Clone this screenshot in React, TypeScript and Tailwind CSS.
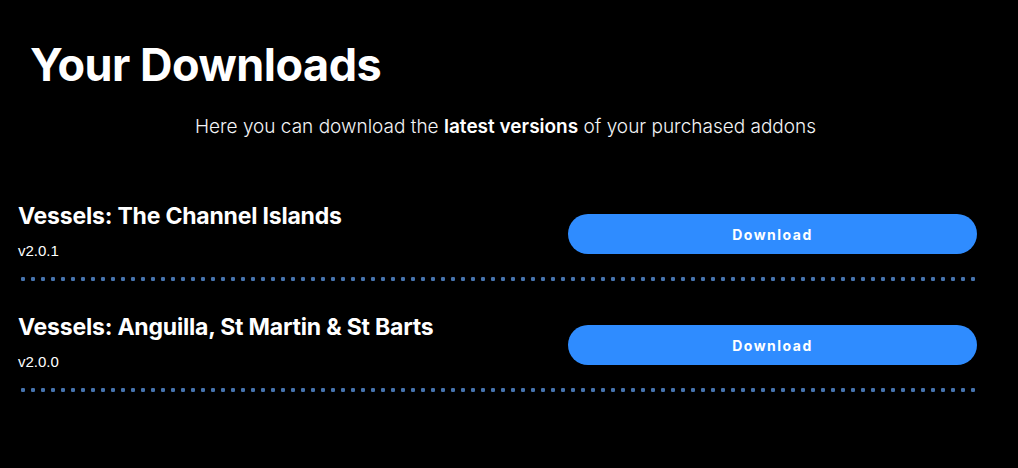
const downloads = [
  { name: 'Vessels: The Channel Islands', version: 'v2.0.1' },
  { name: 'Vessels: Anguilla, St Martin & St Barts', version: 'v2.0.0' }
]

const App = () => {
  return (
    <div className="min-h-[468px] w-full bg-black text-white font-['Inter',sans-serif]">
      <div className="pl-[18px] pr-[41px]">
        <h1 className="pl-[12px] pt-[37px] text-[45px] leading-[56px] font-bold tracking-[-0.5px]">
          Your Downloads
        </h1>
        <p className="mt-[22px] pl-[16px] text-center text-[19px] leading-[24px] font-light text-gray-100">
          Here you can download the <span className="font-semibold text-white">latest versions</span> of your purchased addons
        </p>

        <div className="mt-[31px]">
          {downloads.map((item) => (
            <div key={item.name}>
              <div className="flex items-center justify-between pt-[32px] pb-[17px]">
                <div>
                  <h3 className="text-[23px] leading-[28px] font-bold tracking-[-0.2px]">{item.name}</h3>
                  <div className="mt-[12px] text-[15px] leading-[18px] font-['Liberation_Sans',sans-serif]">
                    {item.version}
                  </div>
                </div>
                <button className="mt-[6px] h-[40px] w-[409px] rounded-full bg-[#2f8cff] text-[14px] font-bold tracking-[1.5px] text-white">
                  Download
                </button>
              </div>
              <div className="h-[4px] w-full bg-[radial-gradient(circle,#4673ad_2px,transparent_2.4px)] bg-[length:10px_4px] bg-repeat-x" />
            </div>
          ))}
        </div>
      </div>
    </div>
  )
}

export default App
